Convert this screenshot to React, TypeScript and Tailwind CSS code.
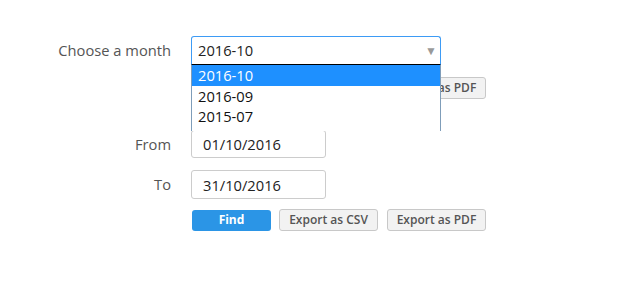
import { useState } from "react";

const months = ["2016-10", "2016-09", "2015-07"];

const ButtonRow = () => (
  <div className="flex items-center gap-2">
    <button className="ml-px w-[79px] h-[21px] rounded-[3px] bg-[#2b95e6] text-white text-[12px] font-bold leading-none">
      Find
    </button>
    <button className="w-[99px] h-[22px] rounded-[3px] border border-[#c8c8c8] bg-[#f2f2f2] text-[#555] text-[12px] font-semibold leading-none">
      Export as CSV
    </button>
    <button className="ml-px w-[99px] h-[22px] rounded-[3px] border border-[#c8c8c8] bg-[#f2f2f2] text-[#555] text-[12px] font-semibold leading-none">
      Export as PDF
    </button>
  </div>
);

const App = () => {
  const [month] = useState("2016-10");
  const [from, setFrom] = useState("01/10/2016");
  const [to, setTo] = useState("31/10/2016");

  return (
    <main
      className="w-[628px] h-[283px] bg-white text-[14.7px] text-[#333]"
      style={{ fontFamily: '"Open Sans", sans-serif' }}
    >
      <div className="flex flex-col pt-9">
        {/* month select */}
        <div className="flex items-center h-[29px]">
          <label className="w-[171px] text-right text-[#555]">Choose a month</label>
          <div className="relative ml-5">
            <div className="flex items-center justify-between w-[250px] h-[29px] border border-[#3d9bf5] border-b-black rounded-t-[3px] pl-[6px] pr-[3px] text-[#222]">
              <span>{month}</span>
              <span className="text-[#999] text-[12px]">▼</span>
            </div>

            {/* open list */}
            <ul className="absolute left-0 top-[29px] z-10 w-[250px] h-[66px] bg-white border-x border-[#7f9db9] text-[#111]">
              {months.map((m) => (
                <li
                  key={m}
                  className={`h-[20px] leading-[20px] pl-[6px] ${
                    m === month ? "bg-[#1e90ff] text-white h-[21px] leading-[21px]" : ""
                  }`}
                >
                  {m}
                </li>
              ))}
            </ul>
          </div>
        </div>

        {/* buttons row hidden under the list */}
        <div className="flex mt-3">
          <div className="w-[171px]" />
          <div className="ml-5">
            <ButtonRow />
          </div>
        </div>

        {/* from */}
        <div className="flex items-center mt-[31px]">
          <label className="w-[171px] text-right text-[#555]">From</label>
          <input
            value={from}
            onChange={(e) => setFrom(e.target.value)}
            className="ml-5 w-[135px] h-[28px] border border-[#ccc] rounded-[3px] px-[11px] text-[#222] outline-none"
          />
        </div>

        {/* to */}
        <div className="flex items-center mt-3">
          <label className="w-[171px] text-right text-[#555]">To</label>
          <input
            value={to}
            onChange={(e) => setTo(e.target.value)}
            className="ml-5 w-[135px] h-[29px] border border-[#ccc] rounded-[3px] px-[11px] text-[#222] outline-none"
          />
        </div>

        <div className="flex mt-[10px]">
          <div className="w-[171px]" />
          <div className="ml-5">
            <ButtonRow />
          </div>
        </div>
      </div>
    </main>
  );
};

export default App;
